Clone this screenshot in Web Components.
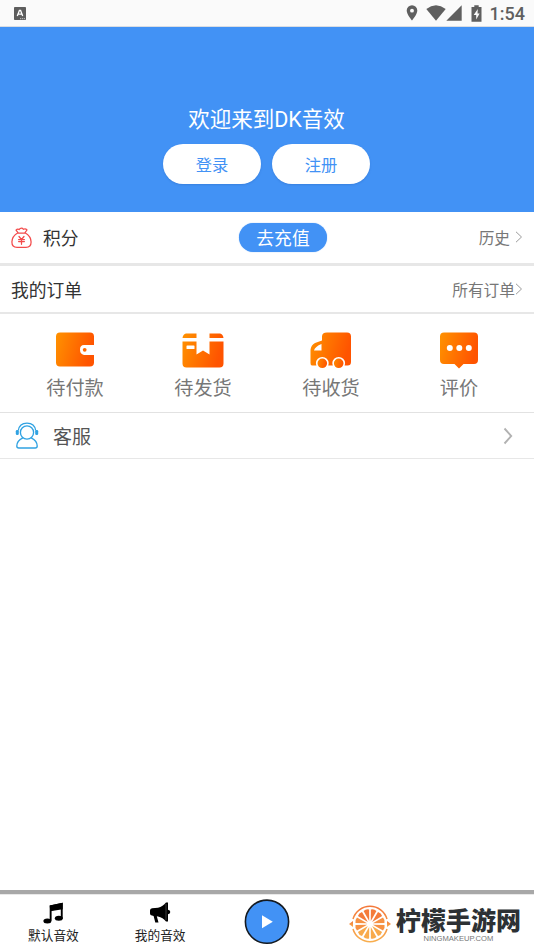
<!DOCTYPE html>
<html lang="zh-CN">
<head>
<meta charset="utf-8">
<title>DK音效</title>
<style>
html,body{margin:0;height:100%;background:#fff}
body{font-family:Roboto,"Noto Sans CJK SC",sans-serif;overflow:hidden}
</style>
</head>
<body>
<dk-app></dk-app>
<script>
const define = (name, html) => {
  const t = document.createElement('template');
  t.innerHTML = html;
  customElements.define(name, class extends HTMLElement {
    constructor() {
      super();
      this.attachShadow({mode: 'open'}).append(t.content.cloneNode(true));
    }
  });
};

const grad = '<defs><linearGradient id="g" x1="0" x2="1" y1="0" y2=".25"><stop offset="0" stop-color="#ff9200"/><stop offset="1" stop-color="#ff5400"/></linearGradient></defs>';
const ICONS = {
  wallet: [42, 42, grad + '<path fill="url(#g)" d="M6 2.500H36Q40 2.500 40 6.500V15H30Q26 15 26 19.500T30 25H40V32.500Q40 36.500 36 36.500H6Q2 36.500 2 32.500V6.500Q2 2.500 6 2.500Z"/><circle cx="30.700" cy="19.800" r="1.900" fill="#ff6800"/>'],
  box: [44, 42, grad + '<path fill="url(#g)" d="M5 3.500H15.500V8H1.500Q2 4 5 3.500ZM28.500 3.500H39Q42 4 42.500 8H28.500ZM1.500 11.500H15.500V24.500L22 20.500L28.500 24.500V11.500H42.500V33.500Q42.500 37.500 38.500 37.500H5.500Q1.500 37.500 1.500 33.500Z"/><rect x="5.500" y="15.500" width="8" height="3.600" rx=".6" fill="#fff"/>'],
  truck: [44, 42, grad + '<path fill="url(#g)" d="M18 2.500H38Q42 2.500 42 6.500V32Q42 35.500 38.500 35.500H3Q1.500 35.500 1.500 33V20Q2 15 6 13L13 10.500V6.500Q13 2.500 18 2.500Z"/><path fill="#fff" d="M5 20.500Q6 16.500 12.500 14V20.500Z"/><g fill="url(#g)" stroke="#fff" stroke-width="1.600"><circle cx="13.300" cy="33.300" r="5.600"/><circle cx="29.700" cy="33.300" r="5.600"/></g>'],
  chat: [42, 42, grad + '<path fill="url(#g)" d="M6 2.500H36Q40 2.500 40 6.500V30Q40 34 36 34H25.500L21 38.500L16.500 34H6Q2 34 2 30V6.500Q2 2.500 6 2.500Z"/><g fill="#fff"><circle cx="11.800" cy="18" r="3"/><circle cx="21.300" cy="18" r="3"/><circle cx="30.800" cy="18" r="3"/></g>'],
  bag: [22, 22, '<g fill="none" stroke="#f34b4b" stroke-width="1.250" stroke-linejoin="round" stroke-linecap="round"><path d="M7 5.700C3 8 .9 11.500 .9 15C.9 18.800 2.800 20.300 6 20.300H15C18.200 20.300 20.100 18.800 20.100 15C20.100 11.500 18 8 14 5.700M6.500 6.200H14.500M7 5.700L5 3.200Q6.500 1.300 8.100 2.500Q10.500 -.3 12.500 2.300Q14.500 1.300 16 3L14 5.700"/><path d="M8 9.500L10.500 12.500L13 9.500M7.600 12.500H13.400M7.600 14.600H13.400M10.500 12.500V17.300"/></g>'],
  service: [24, 28, '<g fill="none" stroke="#30a2e2" stroke-width="1.350" stroke-linejoin="round"><circle cx="12" cy="10.500" r="6.600"/><path d="M3.300 8.500C4 3.700 7.300 1.100 12 1.100S20 3.700 20.700 8.500"/><path d="M7.800 15.800C4.200 17.500 1.800 20.500 1.800 24Q1.800 26 3.800 26H20.200Q22.200 26 22.200 24C22.200 20.500 19.800 17.500 16.200 15.800"/></g><g fill="#30a2e2"><rect x=".8" y="8" width="3" height="5" rx="1.300"/><rect x="20.200" y="8" width="3" height="5" rx="1.300"/></g>'],
  chev: [8, 12, '<path d="M1 .8L6.500 6L1 11.200" fill="none" stroke="#9b9b9b" stroke-width="1"/>'],
  chevbig: [10, 18, '<path d="M1.500 1.500L8.200 9L1.500 16.500" fill="none" stroke="#b2b2b2" stroke-width="1.900"/>'],
  music: [22, 22, '<g transform="translate(1.200 .2)"><path d="M6.500 3.200L19.500 .5V16H17.600V6.500L8.400 8.300V18.500H6.500Z"/><path d="M6.500 3.200L19.500 .5V7L7 9Z"/><ellipse cx="4.200" cy="18.900" rx="4" ry="2.500"/><ellipse cx="15.600" cy="16" rx="4" ry="2.500"/></g>'],
  horn: [22, 22, '<path d="M1 8.500Q1 6.500 3 6.300L9 5.700Q14 4.500 17 .5H19V7.800Q21.300 8.200 21.300 10T19 12.200V19.500H17Q14 15.500 9 14.500L7.800 14.200L9.500 20.500H6.300L4.600 14L3 13.600Q1 13.300 1 11.500Z"/><path d="M17 2V18" stroke="#666" stroke-width=".6"/>'],
  play: [46, 46, '<circle cx="23" cy="22.700" r="21.600" fill="#4292f5" stroke="#151a20" stroke-width="1.600"/><path fill="#fff" d="M18 16.200L28.800 22.700L18 29.200Z"/>'],
  appA: [12, 13, '<rect width="12" height="13" rx=".8" fill="#5d5d5d"/><path d="M3.300 9L5.400 3.500H6.600L8.700 9M4.200 7.200H7.800" fill="none" stroke="#fff" stroke-width="1.300"/><path d="M6 11.700H11" stroke="#ddd" stroke-width=".8" stroke-dasharray="1.300 .7"/>'],
  pin: [12, 16, '<path fill="#5f5f5f" fill-rule="evenodd" d="M6 .3A5.300 5.300 0 0 0 .7 5.600C.7 9.500 6 15.600 6 15.600S11.300 9.500 11.300 5.600A5.300 5.300 0 0 0 6 .3ZM6 3.700A1.950 1.950 0 1 1 6 7.600A1.950 1.950 0 0 1 6 3.700Z"/>'],
  wifi: [20, 16, '<path fill="#5f5f5f" d="M.3 4Q10-3.300 19.700 4L10 15.700Z"/>'],
  signal: [16, 16, '<path fill="#5f5f5f" d="M15.700 .3V15.700H.3Z"/>'],
  battery: [11, 17, '<path fill="#5f5f5f" d="M3.300 .3H7.700V2H10.500V16.700H.5V2H3.300Z"/><path fill="#fafafa" d="M6.800 4L2.700 10H5.200V14.500L8.600 8.400H6.500Z"/>']
};
customElements.define('dk-icon', class extends HTMLElement {
  connectedCallback() {
    const [w, h, body] = ICONS[this.getAttribute('name')];
    this.attachShadow({mode: 'open'}).innerHTML =
      `<style>:host{display:block;flex:none;width:${w}px;height:${h}px}svg{display:block}</style><svg width="${w}" height="${h}" viewBox="0 0 ${w} ${h}">${body}</svg>`;
  }
});

define('dk-status', `<style>
:host{display:flex;box-sizing:border-box;height:27px;background:#fafafa;border-bottom:1px solid #d9dde3;padding:0 9px 0 14px;align-items:center;color:#5f5f5f;font:500 18px/26px Roboto,sans-serif}
.sp{flex:1}.pin{margin-right:8px}.sig{margin:0 9px 0 0}time{margin-left:8px;padding-top:1px}
</style><dk-icon name="appA"></dk-icon><span class="sp"></span><dk-icon class="pin" name="pin"></dk-icon><dk-icon name="wifi"></dk-icon><dk-icon class="sig" name="signal"></dk-icon><dk-icon name="battery"></dk-icon><time>1:54</time>`);

define('dk-pill', `<style>
:host{display:block;box-sizing:border-box;width:98px;height:40px;border-radius:20px;background:#fff;color:#4292f5;font-size:16.300px;line-height:43px;text-align:center;box-shadow:0 1px 2px rgba(30,80,160,.25)}
:host([small]){width:88px;height:29px;border-radius:14.500px;background:#4292f5;color:#fff;font-size:17.800px;line-height:31px;box-shadow:0 0 1px rgba(66,146,245,.8)}
</style><slot></slot>`);

define('dk-hero', `<style>
:host{display:flex;flex-direction:column;align-items:center;box-sizing:border-box;height:185px;padding:77px 1px 0 0;background:#4292f5;color:#fff}
h1{margin:0;font-size:21.500px;font-weight:400;line-height:32px;height:40px}
div{display:flex;gap:11px}
</style><h1>欢迎来到DK音效</h1><div><dk-pill>登录</dk-pill><dk-pill>注册</dk-pill></div>`);

define('dk-row', `<style>
:host{display:grid;grid-template-columns:1fr auto 1fr;align-items:center;box-sizing:border-box;height:var(--h,54px);padding:0 11px;border-bottom:var(--b,3px) solid #e7e7e7;color:#333;font-size:17.800px}
.l,.r{display:flex;align-items:center}.r{justify-content:flex-end}
.r{color:#777;font-size:15.700px}
</style><div class="l"><slot></slot></div><slot name="mid"><span></span></slot><div class="r"><slot name="end"></slot></div>`);

define('dk-order', `<style>
:host{display:flex;flex-direction:column;align-items:center;color:#777;font-size:19.200px;line-height:28px}
div{height:45px}
</style><div><slot name="icon"></slot></div><span><slot></slot></span>`);

define('dk-tab', `<style>
:host{display:flex;flex-direction:column;align-items:center;color:#222;font-size:12.700px;line-height:18px;width:106.800px}
div{height:25px}
</style><div><slot name="icon"></slot></div><span><slot></slot></span>`);

define('dk-brand', `<style>
:host{display:flex;gap:5px;padding-top:7px}
svg{display:block;margin-top:3px}
.t{display:flex;flex-direction:column;align-items:center}
b{font:900 25px/25px "Noto Sans CJK SC",sans-serif;color:#2d3134;white-space:nowrap;padding-top:6px;height:27px}
small{font:7.600px/9px "Liberation Sans",sans-serif;color:#777;white-space:nowrap}
</style><svg width="42" height="40" viewBox="0 0 42 40"><defs><linearGradient id="o" x2="0" y2="1"><stop stop-color="#f47738"/><stop offset="1" stop-color="#f8ae4e"/></linearGradient></defs>
<g fill="none" stroke="url(#o)"><path stroke-width="1.500" d="M4 15A17.700 17.700 0 0 1 38 15M4 25A17.700 17.700 0 0 0 38 25"/></g>
<path fill="url(#o)" d="M0 20L4 17V23ZM42 20L38 17V23Z"/><g id="s" fill="url(#o)"></g></svg>
<div class="t"><b>柠檬手游网</b><small>NINGMAKEUP.COM</small></div>`);

define('dk-tabs', `<style>
:host{display:flex;box-sizing:border-box;height:60px;border-top:4px solid #a8a8a8;background:#fff;box-shadow:inset 0 1px #e9e9e9}
dk-tab{padding-top:8px}
.p{display:flex;justify-content:center;width:106.800px;padding-top:5px}
dk-brand{margin-left:28.500px}
</style><dk-tab><dk-icon slot="icon" name="music"></dk-icon>默认音效</dk-tab><dk-tab><dk-icon slot="icon" name="horn"></dk-icon>我的音效</dk-tab><div class="p"><dk-icon name="play"></dk-icon></div><dk-brand></dk-brand>`);

define('dk-app', `<style>
:host{display:flex;flex-direction:column;height:950px;width:534px}
.bag{margin-right:10px}
.pts{margin-bottom:2px}
.ch{margin-left:5px}
dk-pill[small]{margin:0 0 1px 32px}
.points{grid-template-columns:1fr auto 167px;padding-right:11px}
dk-icon[name=chev]{margin-bottom:1px}
.orders{--h:48px;--b:2px}
.help{--h:46px;--b:1px;font-size:19px;color:#555;padding-left:15px}
.help .k{margin-left:14px}
.help dk-icon[slot]{margin-right:10px;margin-left:auto}
nav{display:grid;grid-template-columns:repeat(4,1fr);box-sizing:border-box;height:99px;padding:16px 11px 0;border-bottom:1px solid #e2e2e2}
main{flex:1}
</style>
<dk-status></dk-status><dk-hero></dk-hero>
<dk-row><dk-icon class="bag" name="bag"></dk-icon><span class="pts">积分</span><dk-pill small slot="mid">去充值</dk-pill><span slot="end">历史</span><dk-icon class="ch" slot="end" name="chev"></dk-icon></dk-row>
<dk-row class="orders">我的订单<span slot="end">所有订单</span><dk-icon slot="end" name="chev"></dk-icon></dk-row>
<nav><dk-order><dk-icon slot="icon" name="wallet"></dk-icon>待付款</dk-order><dk-order><dk-icon slot="icon" name="box"></dk-icon>待发货</dk-order><dk-order><dk-icon slot="icon" name="truck"></dk-icon>待收货</dk-order><dk-order><dk-icon slot="icon" name="chat"></dk-icon>评价</dk-order></nav>
<dk-row class="help"><dk-icon name="service"></dk-icon><span class="k">客服</span><dk-icon slot="end" name="chevbig"></dk-icon></dk-row>
<main></main><dk-tabs></dk-tabs>`);

// Citrus segments: twelve wedges around the centre of the logo.
const app = document.querySelector('dk-app').shadowRoot;
const seg = app.querySelector('dk-tabs').shadowRoot.querySelector('dk-brand').shadowRoot.querySelector('#s');
for (let i = 0; i < 12; i++) {
  const p = document.createElementNS('http://www.w3.org/2000/svg', 'path');
  const a = (i * 30 + 15) * Math.PI / 180, pt = (r, d) => `${21 + r * Math.cos(a + d)} ${20 + r * Math.sin(a + d)}`;
  p.setAttribute('d', `M${pt(3, 0)}L${pt(14.5, -.2)}Q${pt(15.8, 0)} ${pt(14.5, .2)}Z`);
  p.setAttribute('fill', Math.sin(a) < -.3 ? '#f47b3b' : Math.sin(a) < .3 ? '#f69143' : '#f8aa4c');
  seg.append(p);
}
</script>
</body>
</html>
